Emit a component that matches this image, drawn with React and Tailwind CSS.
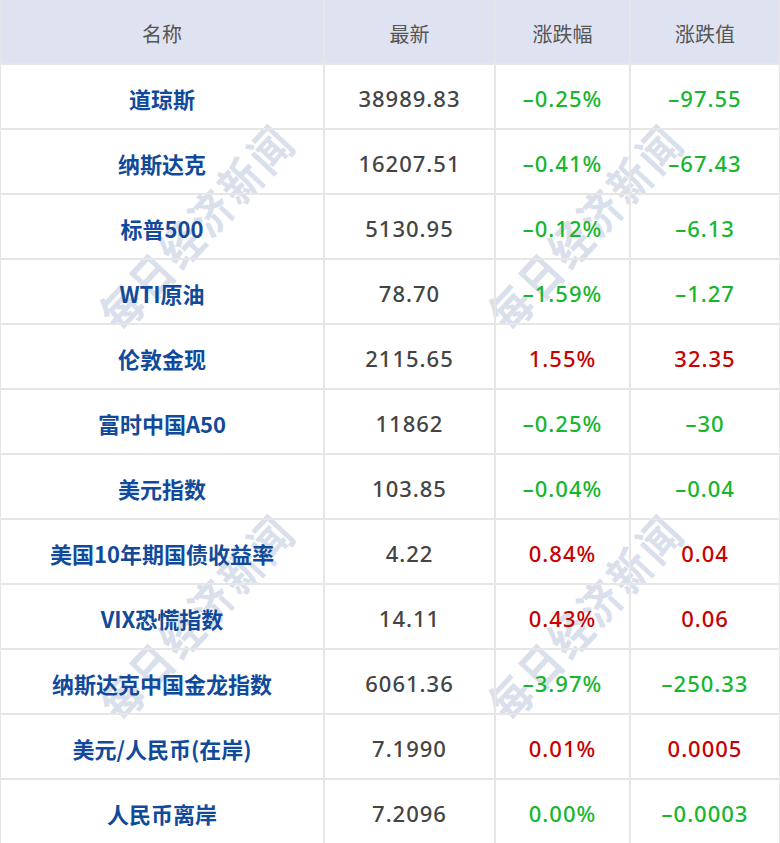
const rows = [
  { name: "道琼斯", last: "38989.83", pct: "–0.25%", val: "–97.55", up: false },
  { name: "纳斯达克", last: "16207.51", pct: "–0.41%", val: "–67.43", up: false },
  { name: "标普500", last: "5130.95", pct: "–0.12%", val: "–6.13", up: false },
  { name: "WTI原油", last: "78.70", pct: "–1.59%", val: "–1.27", up: false },
  { name: "伦敦金现", last: "2115.65", pct: "1.55%", val: "32.35", up: true },
  { name: "富时中国A50", last: "11862", pct: "–0.25%", val: "–30", up: false },
  { name: "美元指数", last: "103.85", pct: "–0.04%", val: "–0.04", up: false },
  { name: "美国10年期国债收益率", last: "4.22", pct: "0.84%", val: "0.04", up: true },
  { name: "VIX恐慌指数", last: "14.11", pct: "0.43%", val: "0.06", up: true },
  { name: "纳斯达克中国金龙指数", last: "6061.36", pct: "–3.97%", val: "–250.33", up: false },
  { name: "美元/人民币(在岸)", last: "7.1990", pct: "0.01%", val: "0.0005", up: true },
  { name: "人民币离岸", last: "7.2096", pct: "0.00%", val: "–0.0003", up: false },
];

const cell = "flex items-center justify-center pt-1 border-b-2 border-r-2 border-[#e6e6e6]";
const num = "text-[22px] font-medium tracking-[1px] font-['Noto_Sans','Noto_Sans_CJK_SC',sans-serif]";

// watermark sits under the table text
function Watermark({ pos }) {
  return (
    <div
      className={`pointer-events-none absolute ${pos} -translate-x-1/2 -translate-y-1/2 -rotate-[47deg] scale-x-[0.85] whitespace-nowrap font-['Noto_Sans_CJK_SC',sans-serif] text-[46px] font-bold tracking-[5px] text-[#d9e0ec]`}
    >
      每日经济新闻
    </div>
  );
}

export default function App() {
  return (
    <div className="relative w-[780px] h-[843px] overflow-hidden bg-white font-['Noto_Sans_CJK_SC',sans-serif]">
      <Watermark pos="left-[196px] top-[226px]" />
      <Watermark pos="left-[196px] top-[616px]" />
      <Watermark pos="left-[585px] top-[226px]" />
      <Watermark pos="left-[585px] top-[616px]" />

      <div className="relative grid grid-cols-[324px_171px_135px_150px] grid-rows-[65px_repeat(12,65px)] border-l border-[#e6e6e6]">
        {/* Header */}
        {["名称", "最新", "涨跌幅", "涨跌值"].map((h, i) => (
          <div
            key={h}
            className={`${cell} bg-[#dfe3f1] text-[20px] text-[#555] ${i === 3 ? "border-r-0" : ""}`}
          >
            {h}
          </div>
        ))}

        {rows.map((r) => {
          const color = r.up ? "text-[#c80000]" : "text-[#16b62f]";
          return [
            <div key={r.name + "n"} className={`${cell} text-[22px] font-bold text-[#124a9b]`}>
              {r.name}
            </div>,
            <div key={r.name + "l"} className={`${cell} ${num} text-[#444]`}>
              {r.last}
            </div>,
            <div key={r.name + "p"} className={`${cell} ${num} ${color}`}>
              {r.pct}
            </div>,
            <div key={r.name + "v"} className={`${cell} border-r-0 ${num} ${color}`}>
              {r.val}
            </div>,
          ];
        })}
      </div>
    </div>
  );
}
